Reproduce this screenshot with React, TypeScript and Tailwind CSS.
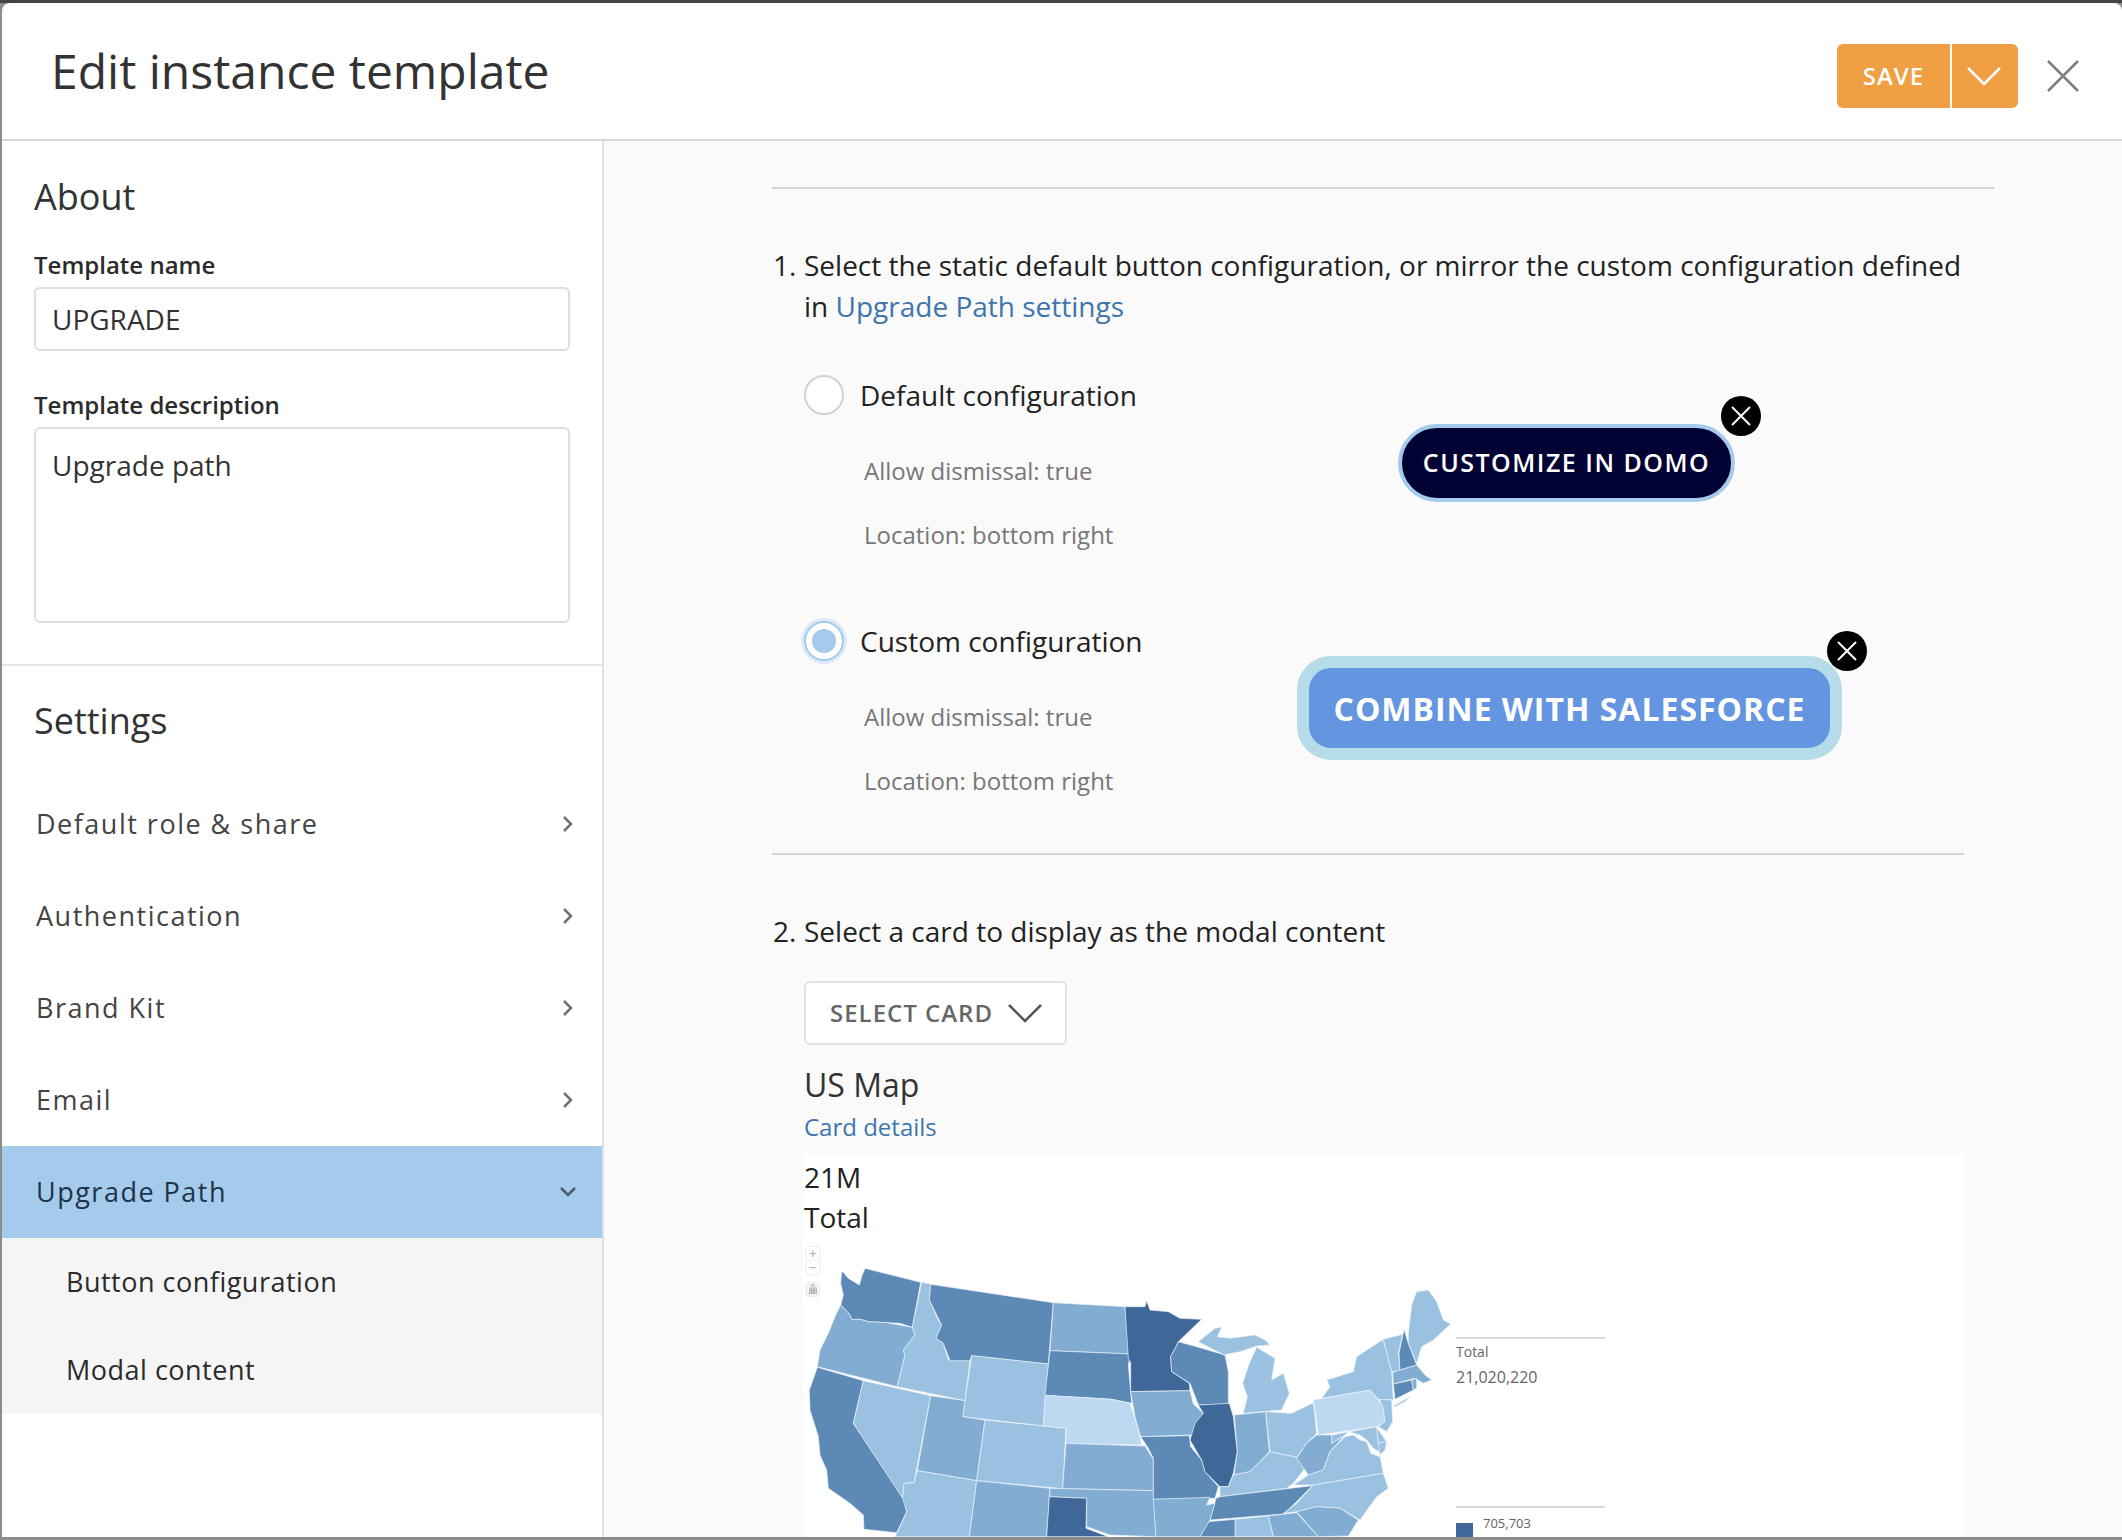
const LIGHTEST = '#bdd8f1';
const LIGHT = '#9bc1e0';
const MID = '#82acd2';
const DARK = '#5c89b6';
const DARKEST = '#3f6899';

// state outlines traced off the card, x and y are in 1/3 px. e() is for the eastern half
const e = (pts: string) =>
    pts.split(' ').map(p => {
        const [x, y] = p.split(',').map(Number);
        return `${x + 900},${y}`;
    }).join(' ');

const states: [string, string][] = [
    [DARK, '125,95 128,95 145,115 178,135 185,110 195,85 362,127 337,262 300,250 260,248 205,245 180,238 155,238 148,222 122,195 130,165 122,130'],
    [MID, '122,195 148,222 155,238 180,238 205,245 260,248 337,262 345,285 310,330 315,345 292,440 52,380 60,330 85,280 105,230'],
    [DARK, '52,382 190,422 160,550 312,775 320,815 290,878 192,868 190,825 150,790 85,745 80,690 60,645 55,590 30,510 28,450'],
    [LIGHT, '190,422 392,467 342,728 312,730 308,775 160,550'],
    [LIGHT, '365,127 392,132 388,180 415,240 425,255 408,295 430,310 445,360 510,362 495,482 292,440 315,345 310,330 345,285 337,262'],
    [DARK, '392,133 760,188 745,372 515,347 510,362 450,362 430,310 408,295 425,255 388,180'],
    [LIGHT, '515,347 745,372 730,558 488,530'],
    [MID, '392,467 495,482 488,530 555,540 530,722 352,692'],
    [LIGHT, '555,540 798,565 788,746 530,722'],
    [LIGHT, '352,692 530,722 508,890 285,890 305,850 320,815 308,775 312,730 342,728'],
    [MID, '530,722 750,745 740,890 508,890'],
    [MID, '760,188 975,200 992,342 750,332'],
    [DARK, '750,332 992,342 985,375 995,490 935,478 735,466'],
    [LIGHTEST, '735,466 935,478 990,490 1015,570 1025,615 798,610 798,565 730,558'],
    [MID, '798,610 1035,618 1060,658 1060,752 788,746'],
    [MID, '750,745 1060,752 1068,890 930,885 860,860 860,775 750,770'],
    [DARKEST, '748,770 860,775 858,865 925,890 740,890'],
    [DARKEST, e('75,200 135,200 140,182 150,210 205,215 240,235 305,238 235,305 228,320 212,350 215,395 268,430 270,452 92,455 92,370 85,355')],
    [MID, e('92,455 270,452 280,492 310,520 300,545 285,550 280,585 122,590 105,530')],
    [DARK, e('122,590 268,587 272,620 305,660 315,695 355,740 345,775 160,778 160,655 145,625')],
    [DARK, e('235,305 290,320 375,345 385,395 385,492 295,495 270,430 215,395 212,350 228,320')],
    [DARKEST, e('295,495 388,490 400,530 412,635 400,700 385,740 360,740 315,695 305,660 270,600 285,550 310,520')],
    [MID, e('403,525 497,515 508,635 480,665 450,695 402,705 412,635')],
    [LIGHT, e('430,520 442,470 428,430 448,370 470,322 525,355 515,420 550,400 568,460 545,510')],
    [LIGHT, e('295,305 345,265 365,262 352,290 390,295 465,285 495,300 510,315 470,318 420,335 395,340 372,345')],
    [LIGHT, e('497,515 575,520 640,488 650,580 620,610 590,652 510,635')],
    [LIGHT, e('400,705 450,695 480,665 510,635 590,652 615,685 580,730 560,745 360,770 360,740 385,740')],
    [MID, e('590,655 620,610 650,585 695,585 695,610 735,585 690,635 670,690 625,705')],
    [LIGHT, e('580,735 625,705 670,690 690,635 735,590 760,585 780,600 800,605 812,640 840,650 850,700 640,735')],
    [DARK, e('360,770 637,737 585,790 550,822 330,840 348,775')],
    [LIGHT, e('550,820 590,790 640,735 850,700 865,745 830,770 780,840 720,805 650,800 590,815')],
    [MID, e('590,815 650,800 720,805 775,840 745,888 655,890')],
    [MID, e('505,828 590,818 655,890 520,890')],
    [LIGHT, e('405,838 505,828 520,890 405,890')],
    [DARK, e('325,845 405,838 405,890 300,890')],
    [MID, e('160,778 330,772 320,795 345,790 330,840 300,890 168,890')],
    [LIGHTEST, e('640,480 810,450 835,480 850,500 855,545 830,560 655,585')],
    [LIGHT, e('665,475 690,440 680,420 760,395 770,350 850,298 875,395 880,480 835,478 810,450')],
    [LIGHT, e('838,478 875,480 878,545 860,575 835,560 855,545 850,505')],
    [LIGHT, e('850,298 908,283 895,340 900,392 875,395')],
    [DARK, e('912,268 925,310 950,375 900,390 897,340')],
    [LIGHT, e('925,280 935,195 950,155 985,150 1010,185 1030,240 1052,252 1000,300 965,320 950,370 925,310')],
    [MID, e('878,397 950,375 975,405 995,420 970,430 945,415 880,432')],
    [DARK, e('880,432 935,420 940,450 885,478')],
    [MID, e('935,420 950,415 950,445 940,450')],
    [LIGHT, e('880,498 930,470 915,485 885,500')],
    [LIGHT, e('695,585 830,560 835,610 845,640 820,625 800,600 780,585 745,575 735,585 695,610')],
    [LIGHT, e('830,562 860,605 835,610')],
    [LIGHT, e('835,610 860,605 855,630 840,645')],
];

function UsMap() {
    return (
        <svg className="block w-[652px] h-[297px] shrink-0" viewBox="9 0 1956 891">
            {states.map(([fill, points], i) => (
                <polygon key={i} points={points} fill={fill} stroke="#eaf2f9" strokeWidth="2" strokeLinejoin="round" />
            ))}
            <rect x="18" y="19" width="41" height="86" rx="8" fill="#fff" stroke="#e2e2e2" strokeWidth="2" />
            <line x1="18" y1="62" x2="59" y2="62" stroke="#e8e8e8" strokeWidth="2" />
            <path d="M29 41h20M39 31v20M29 83h20" stroke="#9a9a9a" strokeWidth="2.5" fill="none" />
            <rect x="18" y="128" width="41" height="41" rx="8" fill="#f4f4f4" stroke="#e2e2e2" strokeWidth="2" />
            <path d="M26 160h26M29 160v-14h6v14M35 160v-26h7v26M42 160v-16h7v16M29 152h20" stroke="#999" strokeWidth="2" fill="none" />
        </svg>
    );
}

function Close({ className }: { className: string }) {
    return (
        <div className={`absolute w-10 h-10 rounded-full bg-black flex items-center justify-center ${className}`}>
            <svg width="22" height="22" viewBox="0 0 22 22">
                <path d="M2 2l18 18M20 2L2 20" stroke="#fff" strokeWidth="2" fill="none" />
            </svg>
        </div>
    );
}

function Chevron({ open }: { open?: boolean }) {
    if (open) {
        return (
            <svg width="18" height="12" viewBox="0 0 18 12" className="mr-[25px]">
                <path d="M2 2l7 7 7-7" stroke="#4d5c6b" strokeWidth="2.5" fill="none" />
            </svg>
        );
    }
    return (
        <svg width="12" height="18" viewBox="0 0 12 18" className="mr-[28px]">
            <path d="M2 2l7 7-7 7" stroke="#6f6f6f" strokeWidth="2.5" fill="none" />
        </svg>
    );
}

function MenuRow({ label, open }: { label: string; open?: boolean }) {
    return (
        <div className={`h-[92px] flex items-center justify-between pl-[34px] text-[27px] tracking-[1.5px] ${open ? 'bg-[#a4caec] text-[#1f3347]' : 'text-[#444]'}`}>
            <span>{label}</span>
            <Chevron open={open} />
        </div>
    );
}

function ConfigInfo({ label, selected }: { label: string; selected?: boolean }) {
    return (
        <div>
            <div className="flex items-center h-10">
                {selected ? (
                    <div className="w-10 h-10 rounded-full border-2 border-[#a4caec] bg-white flex items-center justify-center shadow-[0_0_0_3px_#dcebf9]">
                        <div className="w-6 h-6 rounded-full bg-[#a4caec]"></div>
                    </div>
                ) : (
                    <div className="w-10 h-10 rounded-full border-2 border-[#d2d2d2] bg-white"></div>
                )}
                <span className="ml-4 text-[28px] text-[#222]">{label}</span>
            </div>
            <div className="mt-9 ml-[60px] text-[24px] leading-10 text-[#777]">Allow dismissal: true</div>
            <div className="mt-6 ml-[60px] text-[24px] leading-10 text-[#777]">Location: bottom right</div>
        </div>
    );
}

export default function App() {
    return (
        <div className="w-[2122px] h-[1540px] overflow-hidden bg-[#8c8c8c] border-t-[3px] border-[#444] pl-[2px] pb-[3px] font-['Open_Sans',sans-serif]">
            <div className="h-full bg-white rounded-t-lg flex flex-col overflow-hidden">
                <div className="h-[138px] shrink-0 border-b-2 border-[#d8d8d8] flex items-center justify-between pl-[49px]">
                    <h1 className="text-[48px] text-[#333]">Edit instance template</h1>
                    <div className="flex items-center pr-[43px] pt-[9px]">
                        <div className="flex h-16 rounded-md bg-[#f09f43] text-white">
                            <div className="w-[113px] flex items-center justify-center text-[24px] font-semibold tracking-[1px]">SAVE</div>
                            <div className="w-[2px] bg-white"></div>
                            <div className="w-[66px] flex items-center justify-center pr-[2px]">
                                <svg width="34" height="20" viewBox="0 0 34 20">
                                    <path d="M1 2l16 16L33 2" stroke="#fff" strokeWidth="2.5" fill="none" />
                                </svg>
                            </div>
                        </div>
                        <svg width="32" height="32" viewBox="0 0 32 32" className="ml-[29px]">
                            <path d="M1 1l30 30M31 1L1 31" stroke="#808080" strokeWidth="2.5" fill="none" />
                        </svg>
                    </div>
                </div>
                <div className="flex flex-1 min-h-0">
                    <div className="w-[602px] shrink-0 border-r-2 border-[#e0e0e0]">
                        <div className="h-[525px] px-[32px] border-b-2 border-[#e6e6e6]">
                            <h2 className="pt-[31px] text-[36px] leading-[50px] text-[#333]">About</h2>
                            <label className="block mt-[26px] text-[24px] leading-[34px] font-semibold text-[#2b2b2b]">Template name</label>
                            <div className="mt-[5px] h-16 rounded-md border-2 border-[#dedede] flex items-center px-[16px] text-[28px] text-[#333]">UPGRADE</div>
                            <label className="block mt-[37px] text-[24px] leading-[34px] font-semibold text-[#2b2b2b]">Template description</label>
                            <div className="mt-[5px] h-[196px] rounded-md border-2 border-[#dedede] px-[16px] pt-[16px] text-[28px] leading-[40px] text-[#333]">Upgrade path</div>
                        </div>
                        <h2 className="pt-[30px] h-[112px] text-[36px] leading-[50px] text-[#333] px-[32px]">Settings</h2>
                        <MenuRow label="Default role & share" />
                        <MenuRow label="Authentication" />
                        <MenuRow label="Brand Kit" />
                        <MenuRow label="Email" />
                        <MenuRow label="Upgrade Path" open />
                        <div className="bg-[#f5f5f5] pl-[64px] text-[27px] tracking-[0.5px] text-[#2b2b2b]">
                            <div className="h-[88px] flex items-center">Button configuration</div>
                            <div className="h-[88px] flex items-center">Modal content</div>
                        </div>
                    </div>
                    <div className="flex-1 min-w-0 bg-[#fafafa] pl-[168px] overflow-hidden">
                        <div className="mt-[46px] mr-[128px] h-[2px] bg-[#d4d4d4]"></div>
                        <div className="mr-[158px]">
                            <div className="mt-[56px] ml-[1px] flex text-[28px] leading-[41px] text-[#222]">
                                <span className="w-[31px] shrink-0">1.</span>
                                <p>Select the static default button configuration, or mirror the custom configuration defined in <a className="text-[#3f75ad]">Upgrade Path settings</a></p>
                            </div>
                            <div className="mt-[48px] ml-[32px] flex items-start">
                                <div className="w-[594px] shrink-0"><ConfigInfo label="Default configuration" /></div>
                                <div className="relative mt-[49px]">
                                    <div className="w-[337px] h-[78px] rounded-[39px] bg-[#010133] border-4 border-[#a4caec] flex items-center justify-center text-white text-[25px] font-semibold tracking-[1.5px]">CUSTOMIZE IN DOMO</div>
                                    <Close className="-top-[28px] -right-[26px]" />
                                </div>
                            </div>
                            <div className="mt-[66px] ml-[32px] flex items-start">
                                <div className="w-[493px] shrink-0"><ConfigInfo label="Custom configuration" selected /></div>
                                <div className="relative mt-[35px]">
                                    <div className="w-[545px] h-[104px] rounded-[34px] bg-[#6495e0] border-[12px] border-[#b6dbe9] flex items-center justify-center text-white text-[32px] font-bold tracking-[1px] pt-[1px]">COMBINE WITH SALESFORCE</div>
                                    <Close className="-top-[25px] -right-[25px]" />
                                </div>
                            </div>
                            <div className="mt-[52px] h-[2px] bg-[#d4d4d4]"></div>
                            <div className="mt-[56px] ml-[1px] flex text-[28px] leading-[41px] text-[#222]">
                                <span className="w-[31px] shrink-0">2.</span>
                                <p>Select a card to display as the modal content</p>
                            </div>
                            <div className="mt-[29px] ml-[32px] w-[263px] h-16 rounded-md border-2 border-[#e2e2e2] bg-white flex items-center pl-[24px] text-[24px] font-semibold tracking-[1px] text-[#666]">
                                SELECT CARD
                                <svg width="34" height="20" viewBox="0 0 34 20" className="ml-[15px]">
                                    <path d="M1 2l16 16L33 2" stroke="#555" strokeWidth="2.5" fill="none" />
                                </svg>
                            </div>
                            <div className="mt-[18px] ml-[32px] text-[32px] leading-[44px] text-[#333]">US Map</div>
                            <div className="mt-[2px] ml-[32px] text-[24px] leading-[36px] text-[#3f75ad]">Card details</div>
                            <div className="mt-[9px] ml-[31px] bg-white pt-[3px]">
                                <div className="pl-[1px] text-[28px] leading-10 text-[#222]">21M</div>
                                <div className="pl-[1px] text-[28px] leading-10 text-[#222]">Total</div>
                                <div className="mt-[3px] flex">
                                    <UsMap />
                                    <div className="ml-[1px] w-[149px] pt-[97px]">
                                        <div className="h-[2px] bg-[#d8d8d8]"></div>
                                        <div className="mt-[2px] text-[14px] leading-[22px] text-[#666]">Total</div>
                                        <div className="mt-[2px] text-[16px] leading-[24px] text-[#666]">21,020,220</div>
                                        <div className="mt-[117px] h-[2px] bg-[#d8d8d8]"></div>
                                        <div className="mt-[6px] flex">
                                            <div className="mt-[9px] w-[17px] h-[17px] bg-[#3f6899]"></div>
                                            <div className="ml-[10px] text-[13px] leading-[18px] text-[#666]">
                                                <div>705,703</div>
                                                <div>585,043.6</div>
                                            </div>
                                        </div>
                                    </div>
                                </div>
                            </div>
                        </div>
                    </div>
                </div>
            </div>
        </div>
    );
}
